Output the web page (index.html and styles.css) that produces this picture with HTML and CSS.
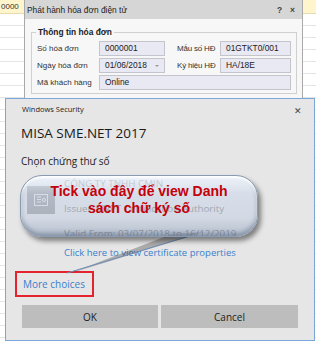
FILE: index.html
```html
<!DOCTYPE html>
<html lang="vi">
<head>
  <meta charset="UTF-8" />
  <title>Phát hành hóa đơn điện tử</title>
  <link rel="stylesheet" href="styles.css">
</head>
<body>

  <div class="sheet">
    <div class="sheet-row hl">0000</div>
  </div>

  <!-- back dialog -->
  <div class="win issue">
    <div class="issue-title">
      <span>Phát hành hóa đơn điện tử</span>
      <span class="issue-tools"><b>?</b><b>×</b></span>
    </div>
    <fieldset class="group">
      <legend>Thông tin hóa đơn</legend>
      <div class="form">
        <label>Số hóa đơn</label>
        <div class="field">0000001</div>
        <label class="l2">Mẫu số HĐ</label>
        <div class="field">01GTKT0/001</div>

        <label>Ngày hóa đơn</label>
        <div class="field date">01/06/2018<span class="arrow"></span></div>
        <label class="l2">Ký hiệu HĐ</label>
        <div class="field">HA/18E</div>

        <label>Mã khách hàng</label>
        <div class="field wide">Online</div>
      </div>
    </fieldset>
  </div>

  <!-- windows security -->
  <div class="win security">
    <div class="sec-head">
      <span>Windows Security</span>
      <span class="sec-close">✕</span>
    </div>
    <div class="sec-app">MISA SME.NET 2017</div>
    <div class="sec-sub">Chọn chứng thư số</div>

    <div class="cert">
      <div class="cert-icon">
        <svg width="14" height="12" viewBox="0 0 14 12">
          <rect x="0.5" y="0.5" width="13" height="11" fill="none" stroke="#e8e8e8" stroke-width="1"/>
          <path d="M3 3h4M3 5.5h4M3 8h4" stroke="#e8e8e8" stroke-width="1"/>
          <circle cx="10" cy="6" r="1.6" fill="none" stroke="#e8e8e8" stroke-width="1"/>
        </svg>
      </div>
      <div class="cert-text">
        <div>CÔNG TY TNHH CMIN</div>
        <div>Issuer: VNPT Certification Authority</div>
        <div>Valid From: 03/07/2018 to 16/12/2019</div>
        <a class="link cert-link">Click here to view certificate properties</a>
      </div>
    </div>

    <div class="more"><a class="link">More choices</a></div>

    <div class="buttons">
      <button>OK</button>
      <button>Cancel</button>
    </div>
  </div>

  <!-- callout -->
  <svg class="tail" width="316" height="344" viewBox="0 0 316 344">
    <polygon points="172,234 204,232 68,274" fill="rgba(60,60,60,0.35)"/>
    <line x1="193" y1="235" x2="67" y2="273" stroke="#6f8fb8" stroke-width="1"/>
  </svg>
  <div class="bubble">Tick vào đây để view Danh<br>sách chữ ký số</div>

</body>
</html>
```

FILE: styles.css
```css
* {
  box-sizing: border-box;
}
body {
  margin: 0;
  width: 316px;
  height: 344px;
  overflow: hidden;
  position: relative;
  font-family: "Liberation Sans", Arial, sans-serif;
  background-color: #fff;
}

/* spreadsheet behind everything */
.sheet {
  position: absolute;
  inset: 0;
  background-image: repeating-linear-gradient(to bottom, transparent 0, transparent 11px, #e4e4e4 11px, #e4e4e4 12px);
  background-position: 0 14px;
}
.sheet-row.hl {
  height: 14px;
  background: #fff5cc;
  border-bottom: 1px solid #e6dcb0;
  font-size: 8px;
  line-height: 14px;
  color: #333;
  padding-left: 1px;
}

.win {
  position: absolute;
}

/* back dialog */
.issue {
  left: 24px;
  top: 0;
  width: 279px;
  height: 98px;
  background: #f7f7f7;
  border-left: 1px solid #a9a9a9;
  border-right: 1px solid #a9a9a9;
  font-size: 8.4px;
}
.issue-title {
  height: 19px;
  background: #d6d6d6;
  display: flex;
  justify-content: space-between;
  align-items: center;
  padding: 0 7px 0 2px;
  color: #222;
}
.issue-tools b {
  margin-left: 8px;
  color: #444;
}
.group {
  margin: 8px 5px 0 6px;
  padding: 4px 5px 4px 5px;
  border: 1px solid #d0d0d0;
  height: 67px;
}
.group legend {
  padding: 0 2px;
  margin-left: -1px;
  font-weight: bold;
  color: #222;
}
.form {
  display: grid;
  grid-template-columns: 62px 66px 55px 71px;
  row-gap: 2px;
  align-items: center;
}
.form label {
  color: #333;
  font-size: 8px;
  white-space: nowrap;
}
.form .l2 {
  padding-left: 12px;
  letter-spacing: -0.2px;
}
.field {
  height: 15px;
  border: 1px solid #c4c4cc;
  background: #e9e9f3;
  line-height: 13px;
  padding-left: 5px;
  color: #222;
  position: relative;
}
.field.wide {
  grid-column: 2 / 5;
}
.arrow {
  position: absolute;
  right: 5px;
  top: 6px;
  border-left: 2px solid transparent;
  border-right: 2px solid transparent;
  border-top: 2px solid #999;
}

/* windows security */
.security {
  left: 5px;
  top: 98px;
  width: 310px;
  height: 243px;
  background: #e6e6e6;
  border: 1px solid #7aa6d9;
  font-family: "Open Sans", "Noto Sans", sans-serif;
}
.sec-head {
  display: flex;
  justify-content: space-between;
  padding: 5px 12px 0 16px;
  font-size: 7.5px;
  color: #222;
}
.sec-close {
  font-size: 9px;
  color: #444;
}
.sec-app {
  margin: 7px 0 0 15px;
  font-size: 13.5px;
  color: #1a1a1a;
}
.sec-sub {
  margin: 12px 0 0 15px;
  font-size: 10px;
  color: #222;
}
.cert {
  display: flex;
  gap: 9px;
  margin: 9px 0 0 21px;
}
.cert-icon {
  width: 28px;
  height: 28px;
  margin-top: 9px;
  background: #8d8d8d;
  display: flex;
  align-items: center;
  justify-content: center;
}
.cert-text {
  font-size: 9.8px;
  color: #6a6a6a;
  line-height: 25px;
  margin-top: -6px;
}
.link {
  color: #3a7fcc;
}
.cert-text .cert-link {
  display: block;
  font-size: 9.5px;
  line-height: 14px;
}
.more {
  margin: 11px 0 0 9px;
  width: 79px;
  height: 26px;
  border: 2px solid #e3232e;
  padding-left: 6px;
  font-size: 10px;
  line-height: 22px;
}
.buttons {
  display: grid;
  grid-template-columns: 136px 137px;
  gap: 3px;
  margin: 8px 0 0 16px;
}
.buttons button {
  height: 23px;
  border: 0;
  background: #bdbdbd;
  font-family: "Open Sans", "Noto Sans", sans-serif;
  font-size: 10px;
  color: #222;
  padding: 0;
}

/* callout over the dialog */
.tail {
  position: absolute;
  left: 0;
  top: 0;
  pointer-events: none;
}
.bubble {
  position: absolute;
  left: 20px;
  top: 175px;
  width: 238px;
  height: 62px;
  border-radius: 22px;
  border: 1px solid #8a9ab0;
  background: linear-gradient(to bottom, rgba(240, 246, 255, 0.8) 0%, rgba(205, 216, 235, 0.6) 30%, rgba(195, 207, 226, 0.55) 70%, rgba(150, 165, 190, 0.6) 100%);
  box-shadow: 3px 4px 5px rgba(0, 0, 0, 0.45), inset 0 2px 2px rgba(255, 255, 255, 0.9), inset 0 -3px 4px rgba(90, 105, 130, 0.5);
  text-align: center;
  font-family: "Liberation Sans", Arial, sans-serif;
  font-weight: bold;
  font-size: 14px;
  line-height: 17px;
  color: #c4000a;
  padding-top: 7px;
}
```
